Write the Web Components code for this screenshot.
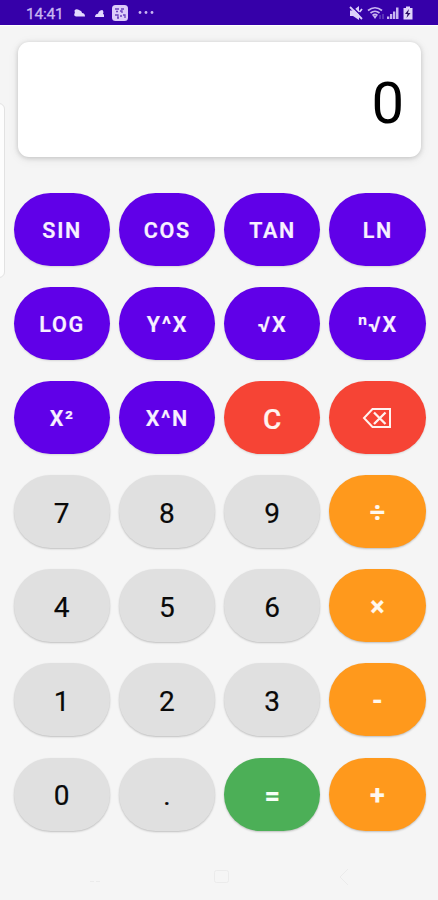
<!DOCTYPE html>
<html lang="en">
<head>
<meta charset="utf-8">
<title>Calculator</title>
<style>
  body {
    margin: 0;
    background: #f5f5f5;
    font-family: Roboto, "Liberation Sans", sans-serif;
  }
</style>
</head>
<body>
<calc-screen>
  <status-bar slot="status">14:41</status-bar>
  <calc-display>0</calc-display>
  <calc-keypad>
    <calc-key kind="fn">SIN</calc-key>
    <calc-key kind="fn">COS</calc-key>
    <calc-key kind="fn">TAN</calc-key>
    <calc-key kind="fn">LN</calc-key>
    <calc-key kind="fn">LOG</calc-key>
    <calc-key kind="fn">Y^X</calc-key>
    <calc-key kind="fn">√X</calc-key>
    <calc-key kind="fn">ⁿ√X</calc-key>
    <calc-key kind="fn">X²</calc-key>
    <calc-key kind="fn">X^N</calc-key>
    <calc-key kind="clear">C</calc-key>
    <calc-key kind="clear"><backspace-icon></backspace-icon></calc-key>
    <calc-key>7</calc-key>
    <calc-key>8</calc-key>
    <calc-key>9</calc-key>
    <calc-key kind="op">÷</calc-key>
    <calc-key>4</calc-key>
    <calc-key>5</calc-key>
    <calc-key>6</calc-key>
    <calc-key kind="op">×</calc-key>
    <calc-key>1</calc-key>
    <calc-key>2</calc-key>
    <calc-key>3</calc-key>
    <calc-key kind="op">-</calc-key>
    <calc-key>0</calc-key>
    <calc-key>.</calc-key>
    <calc-key kind="equals">=</calc-key>
    <calc-key kind="op">+</calc-key>
  </calc-keypad>
  <nav-buttons slot="nav"></nav-buttons>
</calc-screen>

<script>
// registers an element whose shadow root is cloned from the given markup
function define (name, html) {
  const template = document.createElement('template');
  template.innerHTML = html;
  window.customElements.define(name, class extends HTMLElement {
    constructor () {
      super();
      this.attachShadow({ mode: 'open' });
      this.shadowRoot.appendChild(template.content.cloneNode(true));
    }
  });
}

define('calc-screen', /* html */ `
  <style>
    :host {
      position: relative;
      display: flex;
      flex-direction: column;
      height: 900px;
      overflow: hidden;
      background: #f5f5f5;
    }
    main {
      flex: 1;
      padding-top: 17px;
    }
    /* edge panel handle, floats over the left side */
    .edge {
      position: absolute;
      left: -11px;
      top: 103px;
      width: 14px;
      height: 173px;
      border: 1px solid #e2e2e2;
      border-radius: 6px;
      background: #fdfdfd;
    }
  </style>
  <slot name="status"></slot>
  <main><slot></slot></main>
  <slot name="nav"></slot>
  <div class="edge"></div>
`);

define('status-bar', /* html */ `
  <style>
    :host {
      display: flex;
      align-items: center;
      box-sizing: border-box;
      height: 25px;
      padding: 2px 23px 0 26px;
      background: #3600a9;
      box-shadow: 0 1px 1px #fff;
      color: #c9b6f1;
      font-size: 15.5px;
      letter-spacing: -0.2px;
      -webkit-text-stroke: 0.3px;
    }
    .time {
      width: 47px;
    }
    .right {
      margin-left: auto;
    }
    svg {
      display: block;
      fill: currentColor;
    }
  </style>
  <span class="time"><slot></slot></span>
  <svg width="84" height="18" viewBox="0 0 84 18">
    <path d="M1.500 5.500Q3 3.600 5 4.600L8 6Q9 7 9 8Q12 8.200 12 11.500H3Q.8 11 1.200 9Q2.300 8 1.500 5.500Z" fill="#e4d9ff"/>
    <path d="M22 12Q22 9 25 8.700Q26 5 29.500 5L30.500 7L30 8.700Q31.500 9 31 12Z" fill="#e4d9ff"/>
    <rect x="39" y="0" width="16" height="16" rx="3.500" fill="#dccbfa"/>
    <path d="M42 4h4M48 4h3M43 6.500h2M47 6h2v2M42 10h3v3M47 11h2M50 10h2v3M44 13h2" fill="none" stroke="#6940bd" stroke-width="1.300"/>
    <g><circle cx="67" cy="7.500" r="1.400"/><circle cx="73" cy="7.500" r="1.400"/><circle cx="79" cy="7.500" r="1.400"/></g>
  </svg>
  <svg class="right" width="66" height="18" viewBox="0 0 66 18">
    <!-- muted speaker -->
    <path d="M1 5.500h3l6-4.500v14l-6-4H1z" fill="#dccffa"/>
    <path d="M2.500 1L14.500 13" fill="none" stroke="#3600a9" stroke-width="1.500"/>
    <path d="M1 2L13 14M10.500 7l2.500-3" fill="none" stroke="#dccffa" stroke-width="1.800"/>
    <!-- wifi -->
    <path d="M19 5.500Q26 0 33 5.500M21.500 8Q26 4.500 30.500 8M23.500 10.500Q26 8.500 28.500 10.500" fill="none" stroke="currentColor" stroke-width="1.700"/>
    <path d="M24 11h4l-2 3z"/>
    <path d="M31 14V10M34 9v5" stroke="#7355c4" stroke-width="1.200"/>
    <!-- signal -->
    <path d="M38 11.500h2.300V14H38zM41 9h2.300v5H41zM44 6.500h2.300V14H44zM47 2.500h2.500V14H47z"/>
    <!-- battery -->
    <path d="M57 1.500h4V3h2.500v11.500h-9V3H57z" fill="#e0d5fa"/>
    <path d="M60 4l-4 5h2.500l-1 4 4-5H59z" fill="#2a0b62"/>
  </svg>
`);

define('calc-display', /* html */ `
  <style>
    :host {
      display: flex;
      align-items: center;
      justify-content: flex-end;
      box-sizing: border-box;
      height: 115px;
      margin: 0 17px 0 18px;
      padding: 7px 17px 0 0;
      border-radius: 11px;
      background: #fff;
      box-shadow: 0 1px 5px rgba(0, 0, 0, 0.18), 0 2px 12px rgba(0, 0, 0, 0.07);
      color: #000;
      font-size: 58px;
      line-height: 1;
    }
  </style>
  <slot></slot>
`);

define('calc-keypad', /* html */ `
  <style>
    :host {
      display: grid;
      grid-template-columns: repeat(4, 1fr);
      grid-auto-rows: 73px;
      gap: 21.1px 9px;
      margin: 36px 12.5px 0 13.5px;
    }
  </style>
  <slot></slot>
`);

define('calc-key', /* html */ `
  <style>
    :host {
      display: flex;
      align-items: center;
      justify-content: center;
      box-sizing: border-box;
      padding-top: 4px;
      border-radius: 37px;
      background: #e0e0e0;
      box-shadow: 0 1px 2px rgba(0, 0, 0, 0.22);
      color: #090909;
      font-size: 28px;
      line-height: 1;
      -webkit-text-stroke: 0.2px;
    }
    :host([kind="fn"]) {
      padding: 2px 0 0 1px;
      background: #6000e8;
      color: #f8f0ff;
      font-size: 21.5px;
      font-weight: 600;
      letter-spacing: 1.7px;
      box-shadow: 0 1px 2px rgba(0, 0, 0, 0.12);
    }
    :host([kind="clear"]) {
      background: #f64435;
      color: #fff3ef;
      font-weight: 500;
      box-shadow: 0 1px 2px rgba(0, 0, 0, 0.12);
    }
    :host([kind="op"]) {
      background: #ff991c;
      color: #fff8ef;
      font-size: 27px;
      font-weight: 700;
    }
    :host([kind="equals"]) {
      background: #4caf57;
      color: #f7fff7;
      font-size: 27px;
      font-weight: 700;
    }
  </style>
  <slot></slot>
`);

define('backspace-icon', /* html */ `
  <style>
    :host {
      display: block;
      margin-bottom: 3px;
    }
    svg {
      display: block;
      fill: none;
      stroke: currentColor;
      stroke-width: 2;
    }
  </style>
  <svg width="30" height="22" viewBox="0 0 30 22">
    <path d="M10.500 2H28V20H10.500L2 11Z"/>
    <path d="M12 5.500L23.500 17M23.500 5.500L12 17" stroke-width="2.300"/>
  </svg>
`);

// system navigation, nearly invisible on the light background
define('nav-buttons', /* html */ `
  <style>
    :host {
      display: flex;
      align-items: center;
      justify-content: space-between;
      box-sizing: border-box;
      height: 46px;
      padding: 0 83px 0 88px;
    }
    svg {
      fill: none;
      stroke: #ebebeb;
      stroke-width: 1;
    }
  </style>
  <svg width="18" height="18" viewBox="0 0 18 18"><path d="M2 13.500h4M8 13.500h4"/></svg>
  <svg width="18" height="18" viewBox="0 0 18 18"><rect x="1.500" y="2.500" width="14" height="12" rx="2"/></svg>
  <svg width="18" height="18" viewBox="0 0 18 18"><path d="M11 1L3 9l8 8"/></svg>
`);
</script>
</body>
</html>
